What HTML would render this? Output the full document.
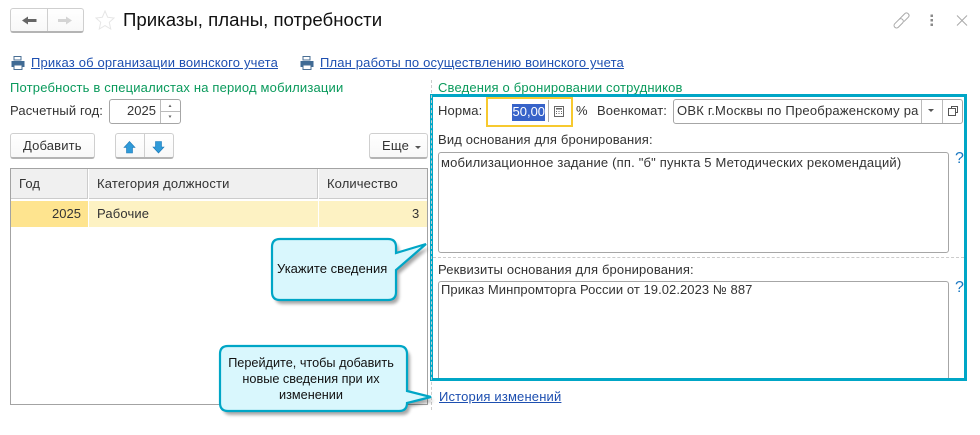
<!DOCTYPE html>
<html lang="ru"><head><meta charset="utf-8"><style>
html,body{margin:0;padding:0;background:#fff}
#p{position:relative;width:980px;height:435px;overflow:hidden;background:#fff;font:13px/16px "Liberation Sans",Arial,sans-serif;color:#333}
#p *{box-sizing:border-box}
.t{position:absolute;white-space:nowrap}
.b{position:absolute}
.btn{position:absolute;background:linear-gradient(#fff,#f8f8f8);border:1px solid #cfcfcf;border-bottom:2px solid #b4b4b4;border-radius:3px}
.lnk{color:#1d4fb0;text-decoration:underline}
.gr{color:#0a9a5c}
.fld{position:absolute;border:1px solid #a6a6a6;border-radius:3px;background:#fff}
svg{position:absolute;overflow:visible}
</style></head><body><div id="p">

<div class="btn" style="left:10px;top:8px;width:74px;height:25px"></div>
<div class="b" style="left:47px;top:9px;width:1px;height:22px;background:#cfcfcf"></div>
<svg style="left:0;top:0" width="130" height="40">
<path d="M22 20.500L28 16.500V19H36.500V22H28V24.500Z" fill="#666"/>
<path d="M72 20.500L66 16.500V19H58V22H66V24.500Z" fill="#d4d4d4"/>
<path d="M105 11L107.700 17.300L114 18L109.300 22.300L110.700 29L105 25.600L99.300 29L100.700 22.300L96 18L102.300 17.300Z" fill="#fff" stroke="#e6e6e6"/>
</svg>
<div class="t" style="left:123px;top:8px;font-size:18.640px;line-height:24px;color:#111">Приказы, планы, потребности</div>

<svg style="left:890px;top:8px" width="80" height="30" fill="none">
<g transform="translate(11.500,12.500) rotate(-45)" stroke="#a8a8a8" stroke-width="1">
<rect x="-9.500" y="-2.500" width="11" height="5" rx="2.500"/>
<path d="M-1 -2.500H7Q9.500 -2.500 9.500 0Q9.500 2.500 7 2.500H1"/>
</g>
<path d="M67 7.500L77 17.500M77 7.500L67 17.500" stroke="#a8a8a8" stroke-width="1"/>
<g fill="#8a8a8a"><rect x="40.500" y="6.500" width="2.500" height="2.500"/><rect x="40.500" y="11" width="2.500" height="2.500"/><rect x="40.500" y="15.500" width="2.500" height="2.500"/></g>
</svg>

<svg style="left:11px;top:56px" width="14" height="14"><path d="M3 .5H10V4H3Z" fill="#fff" stroke="#4a6f94"/><path d="M0.500 5H13.500V11H11V9H3V11H0.500Z" fill="#3f6a94"/><path d="M3 9H11V13.500H3Z" fill="#fff" stroke="#4a6f94"/></svg>
<div class="t lnk" style="left:31px;top:55px;letter-spacing:.175px">Приказ об организации воинского учета</div>
<svg style="left:300px;top:56px" width="14" height="14"><path d="M3 .5H10V4H3Z" fill="#fff" stroke="#4a6f94"/><path d="M0.500 5H13.500V11H11V9H3V11H0.500Z" fill="#3f6a94"/><path d="M3 9H11V13.500H3Z" fill="#fff" stroke="#4a6f94"/></svg>
<div class="t lnk" style="left:320px;top:55px;letter-spacing:.165px">План работы по осуществлению воинского учета</div>

<div class="t gr" style="left:10px;top:80px;letter-spacing:.18px">Потребность в специалистах на период мобилизации</div>
<div class="t" style="left:10px;top:103px;letter-spacing:.12px">Расчетный год:</div>
<div class="fld" style="left:109px;top:99px;width:72px;height:25px"></div>
<div class="b" style="left:160px;top:100px;width:1px;height:23px;background:#bbb"></div>
<div class="b" style="left:160px;top:111px;width:20px;height:1px;background:#bbb"></div>
<div class="t" style="left:127px;top:103px">2025</div>
<svg style="left:160px;top:100px" width="20" height="24"><path d="M8.500 7L10 4.500L11.500 7ZM8.500 15.500L10 18L11.500 15.500Z" fill="#666"/></svg>

<div class="btn" style="left:10px;top:133px;width:85px;height:26px"></div>
<div class="t" style="left:23px;top:138px;letter-spacing:.15px">Добавить</div>
<div class="btn" style="left:115px;top:133px;width:59px;height:26px"></div>
<div class="b" style="left:144px;top:134px;width:1px;height:23px;background:#cfcfcf"></div>
<svg style="left:115px;top:133px" width="59" height="26">
<path d="M14.500 8.500L20 14.500H17.500V20H11.500V14.500H9Z" fill="#2f9ad8" stroke="#1a78b8" stroke-width=".6"/>
<path d="M43.500 20L38 14H40.500V8.500H46.500V14H49Z" fill="#2f9ad8" stroke="#1a78b8" stroke-width=".6"/>
</svg>
<div class="btn" style="left:369px;top:133px;width:59px;height:26px"></div>
<div class="t" style="left:382px;top:138px;letter-spacing:.2px">Еще</div>
<svg style="left:415px;top:146px" width="8" height="5"><path d="M0 0H6L3 3Z" fill="#555"/></svg>

<div class="b" style="left:10px;top:168px;width:418px;height:237px;border:1px solid #a3a3a3;background:#fff"></div>
<div class="b" style="left:11px;top:169px;width:77px;height:30px;background:#f0f0f0;border-right:1px solid #ccc;border-bottom:1px solid #ccc"></div>
<div class="b" style="left:89px;top:169px;width:229px;height:30px;background:#f0f0f0;border-right:1px solid #ccc;border-bottom:1px solid #ccc"></div>
<div class="b" style="left:319px;top:169px;width:108px;height:30px;background:#f0f0f0;border-bottom:1px solid #ccc"></div>
<div class="b" style="left:11px;top:201px;width:77px;height:26px;background:#fee48f"></div>
<div class="b" style="left:89px;top:201px;width:229px;height:26px;background:#fdf2c3"></div>
<div class="b" style="left:319px;top:201px;width:108px;height:26px;background:#fdf2c3"></div>
<div class="t" style="left:19px;top:176px;letter-spacing:.15px">Год</div>
<div class="t" style="left:97px;top:176px;letter-spacing:.17px">Категория должности</div>
<div class="t" style="left:327px;top:176px;letter-spacing:.1px">Количество</div>
<div class="t" style="left:52px;top:206px">2025</div>
<div class="t" style="left:97px;top:206px;letter-spacing:.15px">Рабочие</div>
<div class="t" style="left:412px;top:206px">3</div>

<div class="t gr" style="left:438px;top:80px;letter-spacing:.17px">Сведения о бронировании сотрудников</div>

<div class="b" style="left:430px;top:94px;width:537px;height:287px;border:3px solid #00a6c6"></div>
<div class="b" style="left:431px;top:80px;width:1px;height:330px;border-left:1px dashed #ccc"></div>
<div class="t" style="left:438px;top:103px;letter-spacing:.12px">Норма:</div>
<div class="b" style="left:486px;top:97px;width:87px;height:30px;border:2px solid #f7c92f;background:#fff"></div>
<div class="b" style="left:512px;top:104px;width:33px;height:17px;background:#3763c9"></div>
<div class="t" style="left:512.500px;top:104px;color:#fff">50,00</div>
<div class="b" style="left:548px;top:100px;width:1px;height:22px;background:#aaa"></div>
<svg style="left:554px;top:106px" width="10" height="11"><rect x=".5" y=".5" width="9" height="10" fill="#fff" stroke="#666"/><rect x="2" y="2" width="6" height="1.500" fill="#666"/><path d="M2 5.500h1M4.500 5.500h1M7 5.500h1M2 7.500h1M4.500 7.500h1M7 7.500h1" stroke="#666"/></svg>
<div class="t" style="left:576px;top:103px">%</div>
<div class="t" style="left:597px;top:103px;letter-spacing:.12px">Военкомат:</div>
<div class="fld" style="left:673px;top:99px;width:290px;height:25px"></div>
<div class="b" style="left:921px;top:100px;width:1px;height:23px;background:#bbb"></div>
<div class="b" style="left:942px;top:100px;width:1px;height:23px;background:#bbb"></div>
<div class="t" style="left:677px;top:103px;letter-spacing:.22px;width:242px;overflow:hidden">ОВК г.Москвы по Преображенскому ра</div>
<svg style="left:928px;top:109px" width="8" height="5"><path d="M0 0H6L3 3Z" fill="#555"/></svg>
<svg style="left:948px;top:106px" width="10" height="10" fill="none" stroke="#555"><path d="M3.500 2.500V.5H9.500V6.500H7.500"/><rect x=".5" y="2.500" width="7" height="7"/></svg>

<div class="t" style="left:438px;top:132px;letter-spacing:.15px">Вид основания для бронирования:</div>
<div class="fld" style="left:438px;top:152px;width:511px;height:101px"></div>
<div class="t" style="left:441px;top:155px;letter-spacing:.19px">мобилизационное задание (пп. "б" пункта 5 Методических рекомендаций)</div>
<div class="t" style="left:955px;top:150px;color:#1a78c2;font-size:16px;line-height:18px">?</div>
<div class="b" style="left:433px;top:257px;width:531px;height:1px;border-top:1px dashed #ccc"></div>
<div class="t" style="left:438px;top:262px;letter-spacing:.15px">Реквизиты основания для бронирования:</div>
<div class="b" style="left:438px;top:281px;width:511px;height:97px;border:1px solid #a6a6a6;border-bottom:0;border-radius:3px 3px 0 0;background:#fff"></div>
<div class="t" style="left:441px;top:282px;letter-spacing:.06px">Приказ Минпромторга России от 19.02.2023 № 887</div>
<div class="t" style="left:955px;top:279px;color:#1a78c2;font-size:16px;line-height:18px">?</div>
<div class="t lnk" style="left:439px;top:389px;letter-spacing:.17px">История изменений</div>

<svg style="left:0;top:0" width="980" height="435">
<defs><filter id="s" x="-20%" y="-20%" width="140%" height="140%"><feGaussianBlur stdDeviation="1.500"/></filter></defs>
<g fill="#000" opacity=".35" transform="translate(3,4)" filter="url(#s)">
<path d="M280 239H388Q396 239 396 247V253L426 244L396 270V292Q396 300 388 300H280Q272 300 272 292V247Q272 239 280 239Z"/>
<path d="M228 346H399Q407 346 407 354V391L431 397L407 403V403Q407 411 399 411H228Q220 411 220 403V354Q220 346 228 346Z"/>
</g>
<path d="M280 239H388Q396 239 396 247V253L426 244L396 270V292Q396 300 388 300H280Q272 300 272 292V247Q272 239 280 239Z" fill="#d9f7fd" stroke="#00a6c6" stroke-width="2.200"/>
<path d="M228 346H399Q407 346 407 354V391L431 397L407 403V403Q407 411 399 411H228Q220 411 220 403V354Q220 346 228 346Z" fill="#d9f7fd" stroke="#00a6c6" stroke-width="2.200"/>
</svg>
<div class="t" style="left:277px;top:261px;color:#111;letter-spacing:.02px">Укажите сведения</div>
<div class="t" style="left:217px;top:355px;width:188px;text-align:center;color:#111;font-size:12.700px">Перейдите, чтобы добавить</div>
<div class="t" style="left:217px;top:371px;width:188px;text-align:center;color:#111;font-size:12.700px">новые сведения при их</div>
<div class="t" style="left:217px;top:387px;width:188px;text-align:center;color:#111;font-size:12.700px">изменении</div>
</div></body></html>
